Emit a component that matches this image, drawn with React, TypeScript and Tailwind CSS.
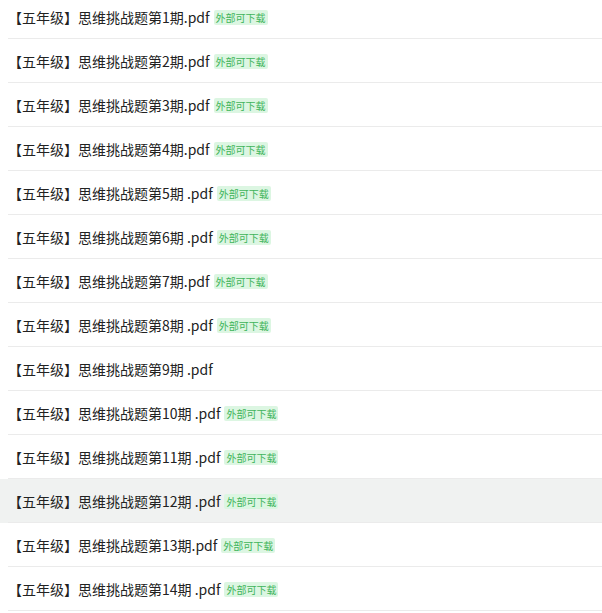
const files = [
  { name: "【五年级】思维挑战题第1期.pdf", badge: true },
  { name: "【五年级】思维挑战题第2期.pdf", badge: true },
  { name: "【五年级】思维挑战题第3期.pdf", badge: true },
  { name: "【五年级】思维挑战题第4期.pdf", badge: true },
  { name: "【五年级】思维挑战题第5期 .pdf", badge: true },
  { name: "【五年级】思维挑战题第6期 .pdf", badge: true },
  { name: "【五年级】思维挑战题第7期.pdf", badge: true },
  { name: "【五年级】思维挑战题第8期 .pdf", badge: true },
  { name: "【五年级】思维挑战题第9期 .pdf", badge: false },
  { name: "【五年级】思维挑战题第10期 .pdf", badge: true },
  { name: "【五年级】思维挑战题第11期 .pdf", badge: true },
  { name: "【五年级】思维挑战题第12期 .pdf", badge: true, active: true },
  { name: "【五年级】思维挑战题第13期.pdf", badge: true },
  { name: "【五年级】思维挑战题第14期 .pdf", badge: true },
];

export default function App() {
  return (
    <div
      className="w-[602px] h-[613px] overflow-hidden bg-white"
      style={{ fontFamily: '"Microsoft YaHei", "Noto Sans CJK SC", sans-serif' }}
    >
      <ul className="-mt-[5px]">
        {files.map((f) => (
          <li key={f.name} className={f.active ? "pl-2 bg-[#f0f2f1]" : "pl-2"}>
            <div className="h-[44px] pt-[1px] flex items-center border-b border-[#ebebeb]">
              <span className="text-[14px] text-[#222] whitespace-pre">{f.name}</span>
              {f.badge && (
                <span className="ml-[4px] px-[2px] h-[15px] leading-[15px] text-[10px] rounded-[2px] bg-[#dcf6e2] text-[#3fb45a]">
                  外部可下载
                </span>
              )}
            </div>
          </li>
        ))}
      </ul>
    </div>
  );
}
